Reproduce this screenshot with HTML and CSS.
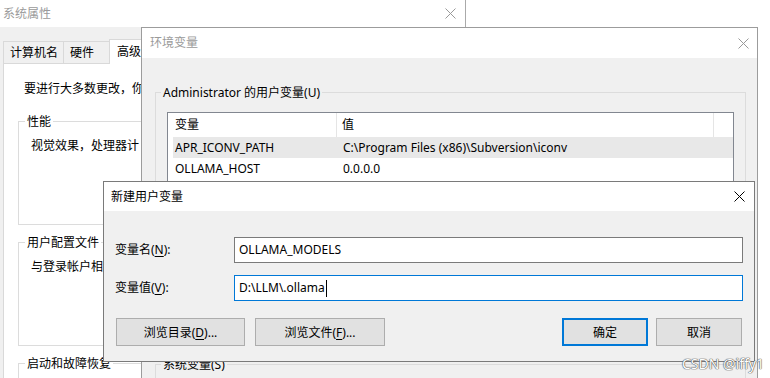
FILE: index.html
```html
<!DOCTYPE html>
<html lang="zh-CN">
<head>
    <meta charset="UTF-8">
    <meta name="viewport" content="width=device-width, initial-scale=1.0">
    <title>新建用户变量</title>
    <link rel="stylesheet" href="styles.css">
</head>
<body>
    <!-- 系统属性 (behind) -->
    <div class="win sysprops">
        <div class="titlebar">
            <span class="title">系统属性</span>
            <svg class="close" width="11" height="11" viewBox="0 0 11 11"><path d="M0.5 0.5L10.5 10.5M10.5 0.5L0.5 10.5"/></svg>
        </div>
        <div class="tabs">
            <div class="tab">计算机名</div>
            <div class="tab">硬件</div>
            <div class="tab active">高级</div>
        </div>
        <div class="tab-panel">
            <p class="intro">要进行大多数更改，你</p>
            <div class="group">
                <div class="group-title">性能</div>
                <p class="group-text">视觉效果，处理器计</p>
            </div>
            <div class="group">
                <div class="group-title">用户配置文件</div>
                <p class="group-text">与登录帐户相</p>
            </div>
            <div class="group">
                <div class="group-title">启动和故障恢复</div>
            </div>
        </div>
    </div>

    <!-- 环境变量 -->
    <div class="win envvars">
        <div class="titlebar">
            <span class="title">环境变量</span>
            <svg class="close" width="11" height="11" viewBox="0 0 11 11"><path d="M0.5 0.5L10.5 10.5M10.5 0.5L0.5 10.5"/></svg>
        </div>
        <div class="env-body">
            <div class="group user-vars">
                <div class="group-title">Administrator 的用户变量(U)</div>
                <div class="listview">
                    <div class="lv-row lv-head">
                        <div class="lv-cell">变量</div>
                        <div class="lv-cell">值</div>
                    </div>
                    <div class="lv-row selected">
                        <div class="lv-cell">APR_ICONV_PATH</div>
                        <div class="lv-cell">C:\Program Files (x86)\Subversion\iconv</div>
                    </div>
                    <div class="lv-row">
                        <div class="lv-cell">OLLAMA_HOST</div>
                        <div class="lv-cell">0.0.0.0</div>
                    </div>
                </div>
            </div>
            <div class="group sys-vars">
                <div class="group-title">系统变量(S)</div>
            </div>
        </div>
    </div>

    <!-- 新建用户变量 (active) -->
    <div class="win newvar">
        <div class="titlebar">
            <span class="title">新建用户变量</span>
            <svg class="close" width="11" height="11" viewBox="0 0 11 11"><path d="M0.5 0.5L10.5 10.5M10.5 0.5L0.5 10.5"/></svg>
        </div>
        <div class="nv-body">
            <div class="nv-form">
                <label class="nv-label">变量名(<u>N</u>):</label>
                <div class="nv-input">OLLAMA_MODELS</div>
                <label class="nv-label">变量值(<u>V</u>):</label>
                <div class="nv-input focused">D:\LLM\.ollama<span class="caret"></span></div>
            </div>
            <div class="nv-buttons">
                <button class="btn wide">浏览目录(<u>D</u>)...</button>
                <button class="btn wide">浏览文件(<u>F</u>)...</button>
                <button class="btn default push">确定</button>
                <button class="btn">取消</button>
            </div>
        </div>
    </div>

    <div class="watermark">CSDN @iffy1</div>
</body>
</html>
```
FILE: styles.css
```css
* {
    margin: 0;
    padding: 0;
    box-sizing: border-box;
}

body {
    position: relative;
    width: 770px;
    height: 378px;
    overflow: hidden;
    background: #fff;
    font-family: "Noto Sans", "Noto Sans CJK SC", sans-serif;
    font-size: 12px;
    color: #000;
}

u {
    text-decoration: underline;
    text-underline-offset: 2px;
}

/* windows */
.win {
    position: absolute;
    background: #f0f0f0;
    overflow: hidden;
}

.titlebar {
    display: flex;
    justify-content: space-between;
    align-items: center;
    background: #fff;
    line-height: 16px;
}

.close path {
    stroke: #999;
    stroke-width: 1;
    fill: none;
}

.sysprops {
    left: 0;
    top: 0;
    width: 466px;
    height: 378px;
    border-right: 1px solid #aaa;
    z-index: 1;
}

.sysprops .titlebar {
    height: 27px;
    padding: 0 9px 0 3px;
}

.sysprops .title,
.envvars .title {
    color: #9a9a9a;
}

.envvars {
    left: 141px;
    top: 27px;
    width: 617px;
    height: 351px;
    border: 1px solid #9c9c9c;
    border-bottom: none;
    z-index: 2;
}

.envvars .titlebar {
    height: 30px;
    padding: 0 8px 0 8px;
}

.newvar {
    left: 103px;
    top: 181px;
    width: 652px;
    height: 181px;
    border: 1px solid #7a7a7a;
    z-index: 3;
}

.newvar .titlebar {
    height: 29px;
    padding: 0 9px 0 7px;
}

.newvar .close path {
    stroke: #000;
}

/* tabs */
.tabs {
    display: flex;
    align-items: flex-end;
    height: 36px;
    padding-left: 3px;
}

.tab {
    height: 22px;
    min-width: 47px;
    padding: 0 5px 0 6px;
    line-height: 21px;
    border: 1px solid #d9d9d9;
    border-bottom: none;
    margin-right: -1px;
    background: #f0f0f0;
}

.tab.active {
    height: 25px;
    min-width: 60px;
    padding-left: 7px;
    margin-bottom: -1px;
    background: #fff;
    position: relative;
    z-index: 1;
    line-height: 23px;
}

.tab-panel {
    margin-left: 3px;
    width: 458px;
    height: 320px;
    background: #fff;
    border: 1px solid #d9d9d9;
    padding: 17px 12px 0 14px;
}

.intro {
    margin-left: 6px;
    line-height: 16px;
}

/* group boxes */
.group {
    border: 1px solid #dcdcdc;
}

.group-title {
    width: fit-content;
    margin: -8px 0 0 6px;
    padding: 0 2px;
    line-height: 16px;
    background: inherit;
}

.tab-panel .group {
    height: 104px;
    margin-top: 17px;
    background: #fff;
}

.tab-panel .intro + .group {
    margin-top: 24px;
}

.group-text {
    margin: 8px 0 0 12px;
    line-height: 16px;
}

/* env body */
.env-body {
    padding: 34px 11px 0 13px;
}

.env-body .group {
    background: #f0f0f0;
}

.env-body .group-title {
    margin-left: 5px;
}

.user-vars {
    padding-bottom: 11px;
}

.sys-vars {
    margin-top: 18px;
    height: 60px;
}

.listview {
    margin: 11px 11px 0 11px;
    height: 222px;
    border: 1px solid #828790;
    background: #fff;
    padding-left: 5px;
}

.lv-row {
    display: grid;
    grid-template-columns: 164px 377px;
    height: 21px;
    line-height: 21px;
    white-space: nowrap;
    overflow: hidden;
}

.lv-cell {
    padding-left: 2px;
    overflow: hidden;
}

.lv-cell + .lv-cell {
    padding-left: 6px;
}

.lv-head {
    height: 24px;
    line-height: 24px;
}

.lv-head .lv-cell {
    border-right: 1px solid #e5e5e5;
}

.lv-head .lv-cell + .lv-cell {
    padding-left: 5px;
}

.lv-row.selected {
    background: #e8e8e8;
}

/* new variable dialog */
.nv-body {
    padding: 26px 11px 15px 11px;
}

.nv-form {
    display: grid;
    grid-template-columns: 119px 1fr;
    row-gap: 12px;
    align-items: center;
}

.nv-label {
    line-height: 16px;
}

.nv-input {
    height: 26px;
    line-height: 24px;
    padding-left: 4px;
    background: #fff;
    border: 1px solid #7a7a7a;
    white-space: nowrap;
}

.nv-input.focused {
    border-color: #0078d7;
}

.caret {
    display: inline-block;
    width: 1px;
    height: 17px;
    margin-left: 1px;
    background: #000;
    vertical-align: middle;
}

.nv-buttons {
    display: flex;
    gap: 10px;
    margin-top: 17px;
    padding: 0 1px;
}

.btn {
    height: 28px;
    width: 86px;
    font: inherit;
    color: #000;
    background: #e1e1e1;
    border: 1px solid #adadad;
}

.btn.wide {
    width: 129px;
}

.btn.wide + .btn.wide {
    width: 130px;
}

.btn.push {
    margin-left: auto;
    margin-right: -2px;
}

.btn.default {
    border: 2px solid #0078d7;
}

.watermark {
    position: absolute;
    right: 6px;
    bottom: 5px;
    z-index: 4;
    font-size: 14px;
    color: #fff;
    text-shadow: 0 0 1px #555, 0 0 1px #555, 0 0 1px #555;
}
```
